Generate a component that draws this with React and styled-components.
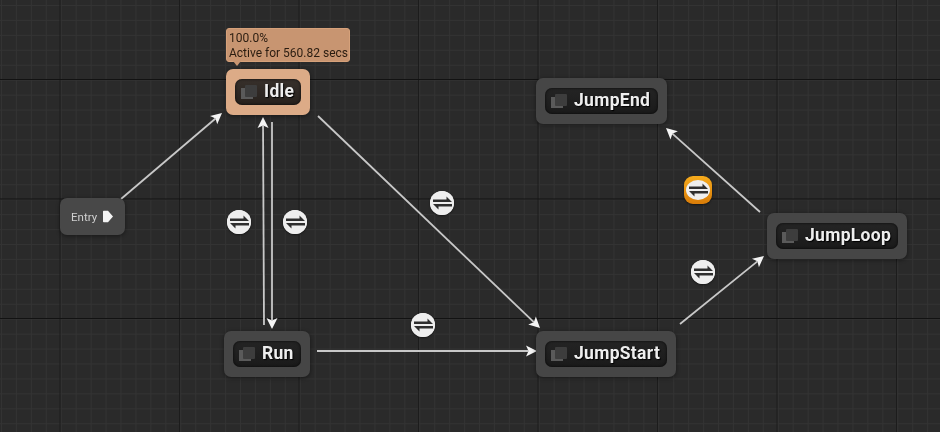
import React from "react";
import styled, { createGlobalStyle } from "styled-components";

const Global = createGlobalStyle`
  html, body { margin: 0; padding: 0; background: #2a2a2a; overflow: hidden; }
  body { font-family: Roboto, "Liberation Sans", sans-serif; }
`;

const Canvas = styled.div`
  position: relative;
  width: 940px;
  height: 432px;
  overflow: hidden;
  filter: blur(0.3px);
  background-color: #2a2a2a;
  background-image:
    linear-gradient(to bottom, #121212 0 1px, transparent 1px),
    linear-gradient(to right, #1c1c1c 0 1px, transparent 1px),
    linear-gradient(to right, #333333 0 1px, transparent 1px),
    linear-gradient(to bottom, #333333 0 1px, transparent 1px);
  background-size: 119.5px 119.5px, 119.5px 119.5px, 14.94px 14.94px, 14.94px 14.94px;
  background-position: 0 79px, 59.5px 0, 1px 0, 0 5px;
`;

const Wires = styled.svg`
  position: absolute;
  inset: 0;
  width: 940px;
  height: 432px;
`;

const Node = styled.div`
  position: absolute;
  left: ${(p) => p.$x}px;
  top: ${(p) => p.$y}px;
  box-sizing: border-box;
  width: ${(p) => p.$w}px;
  height: 45.5px;
  padding: 10px 9px;
  border-radius: 7px;
  background: ${(p) => (p.$active ? "#dcab87" : "#464646")};
  box-shadow: 0 1px 4px rgba(0, 0, 0, 0.45);
`;

const Pill = styled.div`
  display: flex;
  align-items: center;
  gap: 6px;
  height: 26px;
  padding: 0 6px 0 5px;
  border-radius: 7px;
  background: ${(p) => (p.$active ? "linear-gradient(#37302b, #27211d)" : "linear-gradient(#242424, #1a1a1a)")};
  box-shadow: inset 0 0 3px rgba(0, 0, 0, 0.8);
`;

const Label = styled.span`
  margin-bottom: 3px;
  font: 700 17.5px/20px Roboto, "Liberation Sans", sans-serif;
  color: #eeeeee;
  letter-spacing: 0.3px;
  white-space: nowrap;
  text-shadow: 1px 1px 1px #000;
`;

const StateIcon = styled.svg`
  flex: none;
  width: 18px;
  height: 18px;
  margin-bottom: 1px;
`;

const EntryNode = styled.div`
  position: absolute;
  left: 60px;
  top: 198px;
  box-sizing: border-box;
  width: 65px;
  height: 37px;
  display: flex;
  align-items: center;
  padding-left: 11px;
  gap: 5px;
  border-radius: 7px;
  background: #484848;
  box-shadow: 0 1px 4px rgba(0, 0, 0, 0.45);
`;

const EntryLabel = styled.span`
  font: 400 11.5px/14px Roboto, "Liberation Sans", sans-serif;
  color: #d0d0d0;
`;

const Tip = styled.div`
  position: absolute;
  left: 226px;
  top: 28px;
  box-sizing: border-box;
  width: 124px;
  height: 34px;
  padding: 2px 2px;
  border-radius: 3px;
  border: 1px solid #d6a17a;
  background: #c89571;
  color: #2a1c10;
  font: 400 12px/15px Roboto, "Liberation Sans", sans-serif;
  white-space: nowrap;
  &::after {
    content: "";
    position: absolute;
    left: 6px;
    top: 32px;
    border: 4px solid transparent;
    border-top: 5px solid #c89571;
  }
`;

const Rule = styled.div`
  position: absolute;
  left: ${(p) => p.$x - (p.$hot ? 14 : 12)}px;
  top: ${(p) => p.$y - (p.$hot ? 14 : 12)}px;
  box-sizing: border-box;
  width: ${(p) => (p.$hot ? 28 : 24)}px;
  height: ${(p) => (p.$hot ? 28 : 24)}px;
  display: flex;
  align-items: center;
  justify-content: center;
  border-radius: ${(p) => (p.$hot ? "9px" : "50%")};
  background: ${(p) => (p.$hot ? "linear-gradient(#f6ab1c, #d97c08)" : "#eeeeee")};
  box-shadow: 0 1px 2px rgba(0, 0, 0, 0.5);
`;

const RuleFace = styled.div`
  width: 24px;
  height: ${(p) => (p.$hot ? 20 : 24)}px;
  display: flex;
  align-items: center;
  justify-content: center;
  border-radius: 50%;
  background: #eeeeee;
`;

const wires = [
  [121, 199, 222, 113],
  [264, 325, 263, 117],
  [272, 122, 272, 329],
  [318, 116, 540, 328],
  [317, 351, 537, 351],
  [680, 324, 764, 256],
  [760, 212, 666, 128],
];

function Wire({ a }) {
  const [x1, y1, x2, y2] = a;
  const angle = Math.atan2(y2 - y1, x2 - x1);
  const c = Math.cos(angle);
  const s = Math.sin(angle);
  const L = 11;
  const W = 5.5;
  const bx = x2 - L * c;
  const by = y2 - L * s;
  const nx = -s * W;
  const ny = c * W;
  const mx = x2 - (L - 2.5) * c;
  const my = y2 - (L - 2.5) * s;
  return (
    <g>
      <line x1={x1} y1={y1} x2={mx} y2={my} stroke="#c8c8c8" strokeWidth="1.8" />
      <polygon
        points={`${x2},${y2} ${bx + nx},${by + ny} ${mx},${my} ${bx - nx},${by - ny}`}
        fill="#f4f4f4"
      />
    </g>
  );
}

function StateGlyph() {
  return (
    <StateIcon viewBox="0 0 18 18">
      <path d="M1 5h5v8h7v3H1z" fill="#5a5a5a" />
      <rect x="5" y="2" width="12" height="12" rx="1" fill="#3d3d3d" />
    </StateIcon>
  );
}

function SwapGlyph() {
  return (
    <svg width="21" height="14" viewBox="0 0 21 14">
      <path d="M1 3.600h13.500V.5L20 6H1z" fill="#2e2e2e" />
      <path d="M20 10.400H6.500v3.100L1 8h19z" fill="#2e2e2e" />
    </svg>
  );
}

function EntryArrow() {
  return (
    <svg width="12" height="13" viewBox="0 0 12 13">
      <path d="M1 1.500a.8.8 0 0 1 .8-.8H6L11 6.500 6 12.300H1.800a.8.8 0 0 1-.8-.8z" fill="#f4f4f4" />
    </svg>
  );
}

const nodes = [
  { name: "Idle", x: 226, y: 69, w: 84, active: true },
  { name: "Run", x: 224, y: 331, w: 86 },
  { name: "JumpStart", x: 536, y: 331, w: 140 },
  { name: "JumpEnd", x: 536, y: 78, w: 131 },
  { name: "JumpLoop", x: 767, y: 213, w: 140 },
];

const rules = [
  { x: 239, y: 222 },
  { x: 295, y: 222 },
  { x: 442, y: 203 },
  { x: 423, y: 325 },
  { x: 703, y: 272 },
  { x: 698, y: 190, hot: true },
];

export default function App() {
  return (
    <Canvas>
      <Global />
      <Wires viewBox="0 0 940 432">
        {wires.map((a, i) => (
          <Wire key={i} a={a} />
        ))}
      </Wires>
      <EntryNode>
        <EntryLabel>Entry</EntryLabel>
        <EntryArrow />
      </EntryNode>
      {nodes.map((n) => (
        <Node key={n.name} $x={n.x} $y={n.y} $w={n.w} $active={n.active}>
          <Pill $active={n.active}>
            <StateGlyph />
            <Label>{n.name}</Label>
          </Pill>
        </Node>
      ))}
      <Tip>
        100.0%
        <br />
        Active for 560.82 secs
      </Tip>
      {rules.map((r) => (
        <Rule key={`${r.x}-${r.y}`} $x={r.x} $y={r.y} $hot={r.hot}>
          <RuleFace $hot={r.hot}>
            <SwapGlyph />
          </RuleFace>
        </Rule>
      ))}
    </Canvas>
  );
}
